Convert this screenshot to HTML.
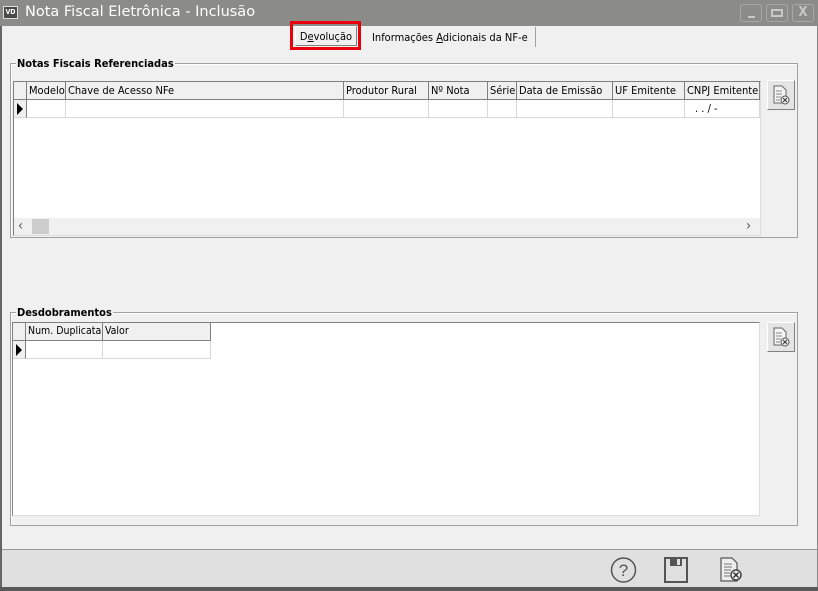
<!DOCTYPE html>
<html><head><meta charset="utf-8"><style>
*{margin:0;padding:0;box-sizing:border-box}
body{width:818px;height:591px;overflow:hidden;background:#f0f0f0;font-family:"DejaVu Sans Condensed","Liberation Sans",sans-serif;font-size:11px;color:#000;position:relative}
.abs{position:absolute}
#title{left:0;top:0;width:818px;height:26px;background:#8b8b87}
#title .t{left:25px;top:4px;color:#fff;font-family:"DejaVu Sans","Liberation Sans",sans-serif;font-size:14.5px}
.logo{left:3px;top:6px;width:15px;height:13px;background:#4a4a4a;border:1px solid #ddd;color:#fff;font-size:7px;font-weight:bold;text-align:center;line-height:11px}
.wb{top:4px;width:22px;height:18px;border:1px solid #a8a8a4;border-radius:3px;background:#8b8b87}
#lb{left:0;top:26px;width:2px;height:565px;background:#666}
#rb{right:0;top:26px;width:1px;height:565px;background:#888}
.grp{border:1px solid #a0a0a0;box-shadow:inset 1px 1px 0 #fff}
.gl{font-weight:bold;background:#f0f0f0;padding:0 1px;font-family:"DejaVu Sans Condensed","Liberation Sans",sans-serif}
.grid{background:#fff;border:1px solid #808080;border-right-color:#ddd;border-bottom-color:#ddd}
.hd{position:absolute;top:0;height:18px;background:#f0f0f0;border-right:1px solid #808080;border-bottom:1px solid #808080;line-height:17px;padding-left:2px;white-space:nowrap;overflow:hidden}
.cell{position:absolute;height:18px;border-right:1px solid #d8d8d8;border-bottom:1px solid #d8d8d8}
.btn{width:28px;height:30px;background:#e4e4e4;border:1px solid #fff;border-right-color:#808080;border-bottom-color:#808080}
</style></head><body>
<div id="title" class="abs"><div class="abs logo">VD</div><div class="abs t">Nota Fiscal Eletrônica - Inclusão</div>
<div class="abs wb" style="left:740px"><div class="abs" style="left:7px;top:11px;width:7px;height:2px;background:#c8c8c4"></div></div>
<div class="abs wb" style="left:766px"><div class="abs" style="left:4px;top:4px;width:12px;height:8px;border:2px solid #c8c8c4"></div></div>
<div class="abs wb" style="left:792px;width:22px;color:#c8c8c4;font-weight:bold;font-size:13px;text-align:center;line-height:16px">X</div>
</div>
<div id="lb" class="abs"></div><div id="rb" class="abs"></div>

<div class="abs" style="left:290px;top:21px;width:71px;height:29px;border:3px solid #e8000c"></div>
<div class="abs" style="left:295px;top:26px;width:62px;height:20px;border:1px solid #fff;border-right-color:#808080;border-bottom-color:#808080;text-align:center;line-height:19px">D<u>e</u>volução</div>
<div class="abs" style="left:372px;top:31px">Informações <u>A</u>dicionais da NF-e</div>
<div class="abs" style="left:535px;top:27px;width:1px;height:20px;background:#a0a0a0"></div>

<div class="abs grp" style="left:10px;top:63px;width:788px;height:175px"></div>
<div class="abs gl" style="left:16px;top:57px">Notas Fiscais Referenciadas</div>
<div class="abs grid" style="left:13px;top:81px;width:748px;height:155px">
<div class="hd" style="left:0;width:13px"></div>
<div class="hd" style="left:13px;width:39px">Modelo</div>
<div class="hd" style="left:52px;width:278px">Chave de Acesso NFe</div>
<div class="hd" style="left:330px;width:85px">Produtor Rural</div>
<div class="hd" style="left:415px;width:59px">Nº Nota</div>
<div class="hd" style="left:474px;width:29px">Série</div>
<div class="hd" style="left:503px;width:96px">Data de Emissão</div>
<div class="hd" style="left:599px;width:72px">UF Emitente</div>
<div class="hd" style="left:671px;width:75px">CNPJ Emitente</div>
<div class="cell" style="left:0;top:18px;width:13px;background:#f0f0f0;border-right-color:#808080"><div class="abs" style="left:3px;top:3px;border-left:6px solid #000;border-top:6px solid transparent;border-bottom:6px solid transparent"></div></div>
<div class="cell" style="left:13px;top:18px;width:39px"></div>
<div class="cell" style="left:52px;top:18px;width:278px"></div>
<div class="cell" style="left:330px;top:18px;width:85px"></div>
<div class="cell" style="left:415px;top:18px;width:59px"></div>
<div class="cell" style="left:474px;top:18px;width:29px"></div>
<div class="cell" style="left:503px;top:18px;width:96px"></div>
<div class="cell" style="left:599px;top:18px;width:72px"></div>
<div class="cell" style="left:671px;top:18px;width:75px;padding-left:10px;line-height:18px">. . / -</div>
<div class="abs" style="left:0;top:136px;width:746px;height:17px;background:#f0f0f0;color:#555;line-height:16px;font-size:14px"><span class="abs" style="left:4px">‹</span><div class="abs" style="left:18px;top:1px;width:17px;height:15px;background:#cdcdcd"></div><span class="abs" style="left:732px">›</span></div>
</div>
<div class="abs btn" style="left:767px;top:80px"><svg width="26" height="28" viewBox="0 0 26 28"><path d="M6 5h8l4 4v13H6z" fill="#f4f4f4" stroke="#666"/><path d="M8 10h6M8 13h6M8 16h5M8 19h4" stroke="#888"/><circle cx="17" cy="19" r="4" fill="#eee" stroke="#555"/><path d="M15 17l4 4M19 17l-4 4" stroke="#333"/></svg></div>

<div class="abs grp" style="left:10px;top:312px;width:788px;height:214px"></div>
<div class="abs gl" style="left:16px;top:306px">Desdobramentos</div>
<div class="abs grid" style="left:12px;top:322px;width:748px;height:194px">
<div class="hd" style="left:0;width:13px"></div>
<div class="hd" style="left:13px;width:77px;font-size:10.5px">Num. Duplicata</div>
<div class="hd" style="left:90px;width:108px;font-size:10.5px">Valor</div>
<div class="cell" style="left:0;top:18px;width:13px;background:#f0f0f0;border-right-color:#808080"><div class="abs" style="left:3px;top:3px;border-left:6px solid #000;border-top:6px solid transparent;border-bottom:6px solid transparent"></div></div>
<div class="cell" style="left:13px;top:18px;width:77px"></div>
<div class="cell" style="left:90px;top:18px;width:108px"></div>
</div>
<div class="abs btn" style="left:767px;top:322px"><svg width="26" height="28" viewBox="0 0 26 28"><path d="M6 5h8l4 4v13H6z" fill="#f4f4f4" stroke="#666"/><path d="M8 10h6M8 13h6M8 16h5M8 19h4" stroke="#888"/><circle cx="17" cy="19" r="4" fill="#eee" stroke="#555"/><path d="M15 17l4 4M19 17l-4 4" stroke="#333"/></svg></div>

<div class="abs" style="left:2px;top:549px;width:815px;height:38px;background:#e0e0e0;border-top:1px solid #999"></div>
<div class="abs" style="left:0;top:587px;width:818px;height:4px;background:#5a5a5a"></div>
<svg class="abs" style="left:608px;top:555px" width="32" height="30"><circle cx="15.5" cy="15" r="12" fill="none" stroke="#555" stroke-width="1.5"/><text x="15.5" y="21" font-family="Liberation Sans" font-size="17" fill="#555" text-anchor="middle">?</text></svg>
<svg class="abs" style="left:663px;top:556px" width="28" height="28"><path d="M2 2h22v24H2z" fill="none" stroke="#555" stroke-width="2"/><path d="M7 2v8h12V2" fill="#555"/><rect x="14" y="3" width="3" height="6" fill="#e0e0e0"/></svg>
<svg class="abs" style="left:718px;top:556px" width="28" height="28"><path d="M3 2h11l5 5v18H3z" fill="#eee" stroke="#555" stroke-width="1.2"/><path d="M6 8h8M6 11h8M6 14h7M6 17h6M6 20h6" stroke="#777"/><circle cx="18" cy="19" r="5" fill="#eee" stroke="#444" stroke-width="1.5"/><path d="M15.5 16.5l5 5M20.5 16.5l-5 5" stroke="#333" stroke-width="1.5"/></svg>
</body></html>
